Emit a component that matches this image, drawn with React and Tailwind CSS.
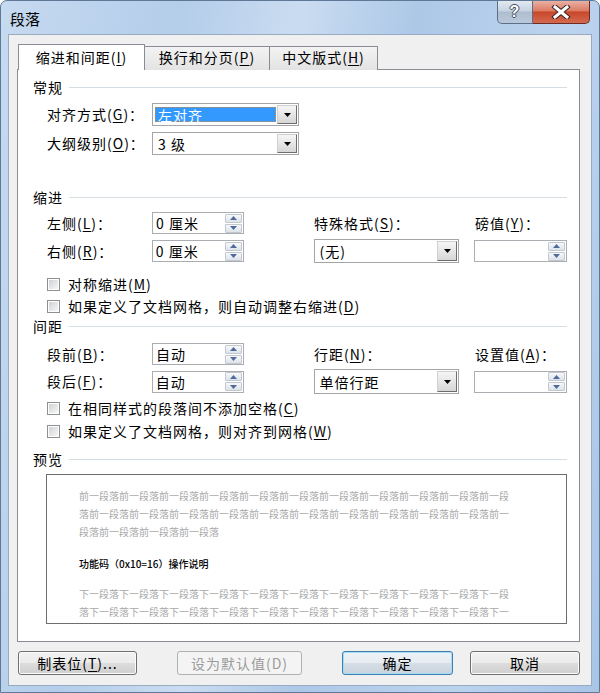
import React from 'react';

const CJK = "font-['Noto_Sans_CJK_SC','Noto_Sans',sans-serif]";

function U({ children }) {
  return <span className="underline underline-offset-2 decoration-1">{children}</span>;
}

function Heading({ children, className = '' }) {
  return (
    <div className={`flex items-center h-[16px] ${className}`}>
      <span className="leading-none">{children}</span>
      <div className="flex-1 h-px bg-[#d5dde5] ml-[6px]" />
    </div>
  );
}

function Tri({ dir = 'down', color = '#000' }) {
  return (
    <svg width="7" height="4" viewBox="0 0 7 4">
      <path d={dir === 'up' ? 'M0 4 L3.5 0 L7 4Z' : 'M0 0 L7 0 L3.5 4Z'} fill={color} />
    </svg>
  );
}

function Spin({ value, className = '' }) {
  return (
    <div className={`flex items-center h-[22px] border border-[#abadb3] bg-white ${className}`}>
      <span className="flex-1 pl-[3px] leading-none whitespace-nowrap">{value}</span>
      <div className="flex flex-col gap-px mr-px">
        <div className="w-[17px] h-[9px] border border-[#c2c8d0] rounded-[1px] bg-linear-to-b from-[#f7f8fa] to-[#dde3ea] flex items-center justify-center">
          <Tri dir="up" color="#4d6b9a" />
        </div>
        <div className="w-[17px] h-[9px] border border-[#c2c8d0] rounded-[1px] bg-linear-to-b from-[#f7f8fa] to-[#dde3ea] flex items-center justify-center">
          <Tri color="#4d6b9a" />
        </div>
      </div>
    </div>
  );
}

function Combo({ value, selected, className = '' }) {
  return (
    <div className={`flex items-stretch border border-[#a5a5a5] bg-white p-px ${className}`}>
      <div className="flex-1 flex items-center py-[2px] pl-px pr-[1px]">
        {selected ? (
          <span className="w-full h-full flex items-center bg-[#3399ff] text-white pl-[2px] border border-dotted border-[#d08a3c] leading-none">
            {value}
          </span>
        ) : (
          <span className="pl-[3px] leading-none">{value}</span>
        )}
      </div>
      <div className="w-[20px] border border-t-[#d0d0d0] border-l-[#d0d0d0] border-r-[#6e6e6e] border-b-[#6e6e6e] bg-linear-to-b from-[#f6f6f6] to-[#d6d6d6] flex items-center justify-center">
        <Tri />
      </div>
    </div>
  );
}

function Check({ children, className = '' }) {
  return (
    <div className={`flex items-center h-[16px] ml-[14px] ${className}`}>
      <div className="w-[13px] h-[13px] border border-[#8e8f8f] bg-white p-px">
        <div className="w-full h-full bg-linear-to-br from-[#cfd2d6] to-[#f7f7f7]" />
      </div>
      <span className="ml-[8px] leading-none whitespace-nowrap">{children}</span>
    </div>
  );
}

function Button({ children, className = '', variant = 'normal' }) {
  const look = {
    normal:
      'border-[#707070] text-black bg-[linear-gradient(#f2f2f2_0%,#ebebeb_49%,#dddddd_50%,#cfcfcf_100%)] shadow-[inset_0_0_0_1px_#fbfbfb]',
    primary:
      'border-[#3c7fb1] text-black bg-[linear-gradient(#eef3f7_0%,#e5ebf0_49%,#d6dee6_50%,#c9d3dc_100%)] shadow-[inset_0_0_0_1px_#a8dcf5]',
    disabled: 'border-[#adb2b5] text-[#9c9c9c] bg-[#f4f4f4]',
  }[variant];
  return (
    <div className={`h-[24px] border rounded-[3px] flex items-center justify-center ${look} ${className}`}>
      {children}
    </div>
  );
}

const seq = (s, off, n) => Array.from({ length: n }, (_, i) => s[(off + i) % 4]).join('');

const BEFORE = [seq('前一段落', 0, 43), seq('前一段落', 3, 43), seq('前一段落', 2, 14)];
const AFTER = [seq('下一段落', 0, 43), seq('下一段落', 3, 43)];

export default function App() {
  return (
    <div
      className={`w-[600px] h-[693px] flex flex-col rounded-t-[7px] border border-[#5f7896] bg-[linear-gradient(100deg,#c6daf0_0%,#b4cdea_25%,#cadcf1_42%,#adc8e7_58%,#bcd3ee_80%,#a9c5e6_100%)] text-[14px] tracking-[1px] text-black ${CJK}`}
    >
      {/* Title bar */}
      <div className="h-[33px] flex justify-between pl-[9px] pr-[9px] shrink-0">
        <span className="self-center text-[15px] leading-none mt-[2px] tracking-normal">段落</span>
        <div className="flex self-start">
          <div className="w-[36px] h-[23px] rounded-bl-[5px] border border-t-0 border-[#5c6f88] bg-[linear-gradient(#e2e9f1_0%,#c7d3e1_45%,#aebdd0_50%,#b9c8da_100%)] flex items-center justify-center">
            <span className="font-['Liberation_Sans',sans-serif] font-bold text-[16px] leading-none text-white [text-shadow:1px_0_#3d4b5c,-1px_0_#3d4b5c,0_1px_#3d4b5c,0_-1px_#3d4b5c]">
              ?
            </span>
          </div>
          <div className="w-[57px] h-[23px] rounded-br-[5px] border border-t-0 border-l-0 border-[#6d2b22] bg-[linear-gradient(#eab1a4_0%,#dc7a63_45%,#c8472b_50%,#d36a50_100%)] flex items-center justify-center">
            <svg width="20" height="14" viewBox="0 0 20 14">
              <path d="M4 2 L16 12 M16 2 L4 12" stroke="#3b2320" strokeWidth="5" strokeLinecap="square" />
              <path d="M4 2 L16 12 M16 2 L4 12" stroke="#fff" strokeWidth="3" strokeLinecap="square" />
            </svg>
          </div>
        </div>
      </div>

      {/* Client area */}
      <div className="mx-[7px] h-[652px] bg-[#f0f0f0] border border-[#97abc2] shrink-0">
        <div className="ml-[8px] mt-[9px] w-[563px]">
          {/* Tabs */}
          <div className="flex items-end pl-px">
            <div className="relative z-10 w-[127px] h-[26px] bg-white border border-b-0 border-[#898c95] flex items-center justify-center pb-[1px]">
              缩进和间距(<U>I</U>)
            </div>
            <div className="-ml-px w-[126px] h-[24px] border border-b-0 border-[#898c95] bg-linear-to-b from-[#f3f3f3] to-[#e3e3e3] flex items-center justify-center pb-[2px]">
              换行和分页(<U>P</U>)
            </div>
            <div className="-ml-px w-[109px] h-[24px] border border-b-0 border-[#898c95] bg-linear-to-b from-[#f3f3f3] to-[#e3e3e3] flex items-center justify-center pb-[2px]">
              中文版式(<U>H</U>)
            </div>
          </div>

          {/* Panel */}
          <div className="-mt-px h-[573px] bg-white border border-[#898c95] pl-[15px] pr-[12px] flex flex-col">
            <Heading className="mt-[9px]">常规</Heading>
            <div className="flex items-center h-[23px] mt-[8px] ml-[14px]">
              <div className="w-[105px]">
                对齐方式(<U>G</U>)：
              </div>
              <Combo value="左对齐" selected className="w-[147px] h-[23px]" />
            </div>
            <div className="flex items-center h-[23px] mt-[6px] ml-[14px]">
              <div className="w-[105px]">
                大纲级别(<U>O</U>)：
              </div>
              <Combo value="3 级" className="w-[147px] h-[23px]" />
            </div>

            <Heading className="mt-[34px]">缩进</Heading>
            <div className="flex items-center h-[22px] mt-[7px] ml-[14px]">
              <div className="w-[105px]">
                左侧(<U>L</U>)：
              </div>
              <Spin value="0 厘米" className="w-[92px]" />
              <div className="ml-[70px] w-[161px]">
                特殊格式(<U>S</U>)：
              </div>
              <div>
                磅值(<U>Y</U>)：
              </div>
            </div>
            <div className="flex items-center h-[24px] mt-[5px] ml-[14px]">
              <div className="w-[105px]">
                右侧(<U>R</U>)：
              </div>
              <Spin value="0 厘米" className="w-[92px]" />
              <Combo value="(无)" className="ml-[70px] w-[146px] h-[24px]" />
              <Spin value="" className="ml-[15px] w-[93px]" />
            </div>
            <Check className="mt-[13px]">
              对称缩进(<U>M</U>)
            </Check>
            <Check className="mt-[6px]">
              如果定义了文档网格，则自动调整右缩进(<U>D</U>)
            </Check>

            <Heading className="mt-[4px]">间距</Heading>
            <div className="flex items-center h-[22px] mt-[9px] ml-[14px]">
              <div className="w-[105px]">
                段前(<U>B</U>)：
              </div>
              <Spin value="自动" className="w-[92px]" />
              <div className="ml-[70px] w-[161px]">
                行距(<U>N</U>)：
              </div>
              <div>
                设置值(<U>A</U>)：
              </div>
            </div>
            <div className="flex items-center h-[25px] mt-[4px] ml-[14px]">
              <div className="w-[105px]">
                段后(<U>F</U>)：
              </div>
              <Spin value="自动" className="w-[92px]" />
              <Combo value="单倍行距" className="ml-[70px] w-[146px] h-[25px]" />
              <Spin value="" className="ml-[15px] w-[93px]" />
            </div>
            <Check className="mt-[6px]">
              在相同样式的段落间不添加空格(<U>C</U>)
            </Check>
            <Check className="mt-[7px]">
              如果定义了文档网格，则对齐到网格(<U>W</U>)
            </Check>

            <Heading className="mt-[12px]">预览</Heading>
            <div className="mt-[7px] ml-[13px] h-[150px] border border-[#6e6e6e] bg-white pl-[32px] pt-[12px] text-[10px] leading-[18px] tracking-normal">
              <div className="text-[#a9a9a9]">
                {BEFORE.map((l, i) => (
                  <div key={i} className="whitespace-nowrap">
                    {l}
                  </div>
                ))}
              </div>
              <div className="mt-[14px] text-black font-medium whitespace-nowrap">功能码（0x10=16）操作说明</div>
              <div className="mt-[12px] text-[#a9a9a9]">
                {AFTER.map((l, i) => (
                  <div key={i} className="whitespace-nowrap">
                    {l}
                  </div>
                ))}
              </div>
            </div>
          </div>
        </div>

        {/* Buttons */}
        <div className="flex mt-[9px] ml-[9px]">
          <Button className="w-[119px]">
            制表位(<U>T</U>)...
          </Button>
          <Button variant="disabled" className="ml-[40px] w-[125px]">
            设为默认值(D)
          </Button>
          <Button variant="primary" className="ml-[40px] w-[111px]">
            确定
          </Button>
          <Button className="ml-[17px] w-[110px]">取消</Button>
        </div>
      </div>
    </div>
  );
}
